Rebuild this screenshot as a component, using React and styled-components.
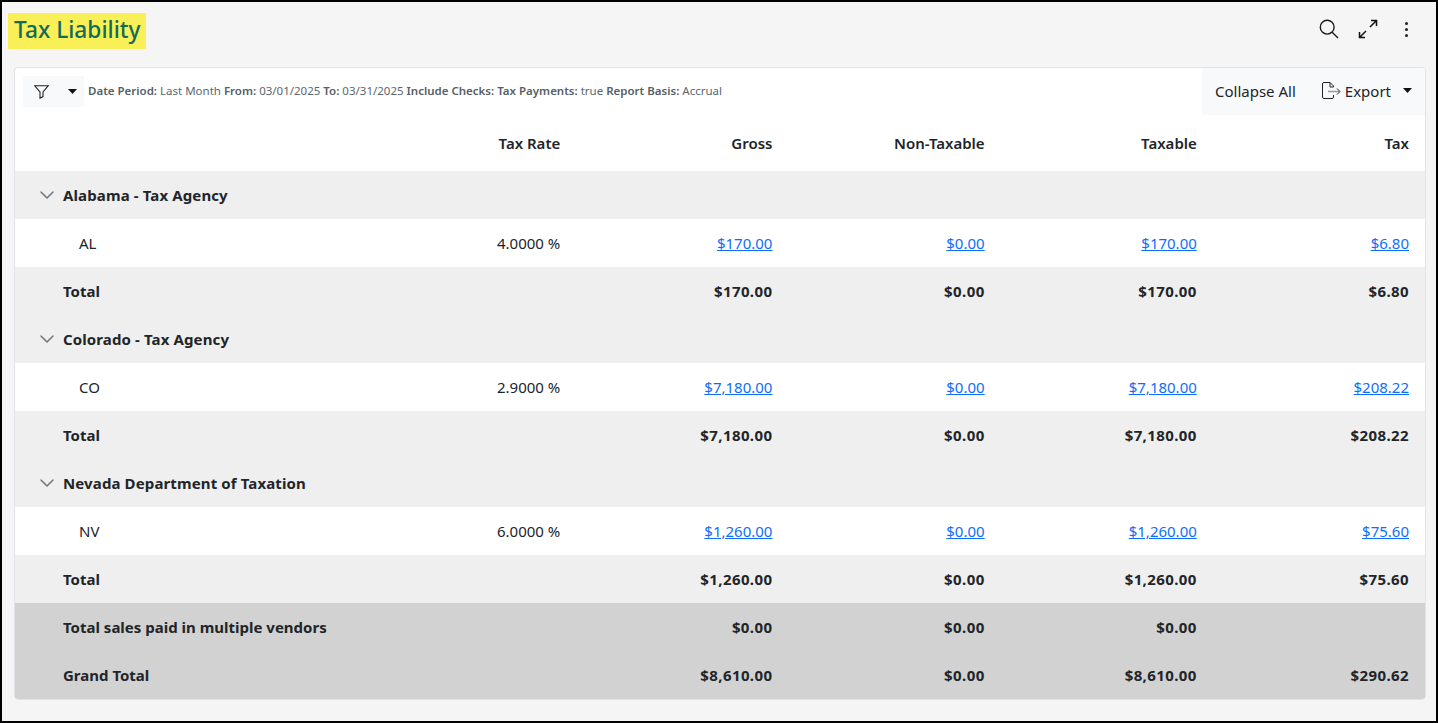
import React from 'react';
import styled, { createGlobalStyle } from 'styled-components';
import { ChevronDown } from 'lucide-react';

const GlobalStyle = createGlobalStyle`
  html, body {
    margin: 0;
    padding: 0;
    background: #f5f5f5;
  }
  * {
    box-sizing: border-box;
  }
`;

const groups = [
  {
    name: 'Alabama - Tax Agency',
    code: 'AL',
    rate: '4.0000 %',
    gross: '$170.00',
    nonTaxable: '$0.00',
    taxable: '$170.00',
    tax: '$6.80',
  },
  {
    name: 'Colorado - Tax Agency',
    code: 'CO',
    rate: '2.9000 %',
    gross: '$7,180.00',
    nonTaxable: '$0.00',
    taxable: '$7,180.00',
    tax: '$208.22',
  },
  {
    name: 'Nevada Department of Taxation',
    code: 'NV',
    rate: '6.0000 %',
    gross: '$1,260.00',
    nonTaxable: '$0.00',
    taxable: '$1,260.00',
    tax: '$75.60',
  },
];

const filters = [
  ['Date Period:', 'Last Month'],
  ['From:', '03/01/2025'],
  ['To:', '03/31/2025'],
  ['Include Checks:', ''],
  ['Tax Payments:', 'true'],
  ['Report Basis:', 'Accrual'],
];

const Caret = () => (
  <svg width="9" height="5" viewBox="0 0 9 5"><path d="M0 0h9L4.5 5z" fill="#111" /></svg>
);

const App = () => (
  <Page>
    <GlobalStyle />
    <TopBar>
      <Title>Tax Liability</Title>
      <TopIcons>
        <svg width="20" height="20" viewBox="0 0 20 20" fill="none" stroke="#1c1c1c" strokeWidth="1.4">
          <circle cx="8.2" cy="8.2" r="6.9" />
          <path d="M13.2 13.2L19 19" />
        </svg>
        <svg width="20" height="20" viewBox="0 0 20 20" fill="none" stroke="#111" strokeWidth="1.5">
          <path d="M1.500 18.500L8 12M12 8L18.500 1.500M13 1.500H18.500V7M1.500 13V18.500H7" />
        </svg>
        <Dots><i /><i /><i /></Dots>
      </TopIcons>
    </TopBar>
    <Card>
      <Toolbar>
        <FilterButton>
          <svg width="15" height="14" viewBox="0 0 15 14" fill="none" stroke="#222" strokeWidth="1.1">
            <path d="M.8.8h13.4L9 7v4.6l-3 1.6V7z" />
          </svg>
          <Caret />
        </FilterButton>
        <FilterText>
          {filters.map(([label, value]) => (
            <React.Fragment key={label}>
              <b>{label}</b>
              {value && ` ${value}`}
              {' '}
            </React.Fragment>
          ))}
        </FilterText>
        <Actions>
          <Action>Collapse All</Action>
          <ExportAction>
            <svg width="19" height="17" viewBox="0 0 19 17" fill="none" stroke="#222" strokeWidth="1">
              <path d="M11.5 5V4L8 .5H2A1.5 1.5 0 0 0 .5 2v13A1.5 1.5 0 0 0 2 16.5h8a1.5 1.5 0 0 0 1.500-1.500V13" />
              <path d="M8 .5V5h3.500" />
              <path d="M6 9.500h11.500" stroke="#999" strokeWidth="1.400" />
              <path d="M15 6.500l3 3-3 3" />
            </svg>
            Export
            <CaretSlot><Caret /></CaretSlot>
          </ExportAction>
        </Actions>
      </Toolbar>
      <Table>
        <colgroup>
          <col />
          <NumberCol />
          <NumberCol />
          <NumberCol />
          <NumberCol />
          <NumberCol />
        </colgroup>
        <thead>
          <tr>
            <HeadCell />
            <HeadCell>Tax Rate</HeadCell>
            <HeadCell>Gross</HeadCell>
            <HeadCell>Non-Taxable</HeadCell>
            <HeadCell>Taxable</HeadCell>
            <HeadCell>Tax</HeadCell>
          </tr>
        </thead>
        <tbody>
          {groups.map((group) => (
            <React.Fragment key={group.code}>
              <ShadedRow>
                <NameCell colSpan={6}>
                  <GroupName>
                    <ChevronDown size={24} color="#6c757d" strokeWidth={1.5} />
                    {group.name}
                  </GroupName>
                </NameCell>
              </ShadedRow>
              <tr>
                <CodeCell>{group.code}</CodeCell>
                <Cell>{group.rate}</Cell>
                <Cell><Amount href="#">{group.gross}</Amount></Cell>
                <Cell><Amount href="#">{group.nonTaxable}</Amount></Cell>
                <Cell><Amount href="#">{group.taxable}</Amount></Cell>
                <Cell><Amount href="#">{group.tax}</Amount></Cell>
              </tr>
              <ShadedRow>
                <TotalName>Total</TotalName>
                <TotalCell />
                <TotalCell>{group.gross}</TotalCell>
                <TotalCell>{group.nonTaxable}</TotalCell>
                <TotalCell>{group.taxable}</TotalCell>
                <TotalCell>{group.tax}</TotalCell>
              </ShadedRow>
            </React.Fragment>
          ))}
          <SummaryRow>
            <TotalName>Total sales paid in multiple vendors</TotalName>
            <TotalCell />
            <TotalCell>$0.00</TotalCell>
            <TotalCell>$0.00</TotalCell>
            <TotalCell>$0.00</TotalCell>
            <TotalCell />
          </SummaryRow>
          <SummaryRow>
            <TotalName>Grand Total</TotalName>
            <TotalCell />
            <TotalCell>$8,610.00</TotalCell>
            <TotalCell>$0.00</TotalCell>
            <TotalCell>$8,610.00</TotalCell>
            <TotalCell>$290.62</TotalCell>
          </SummaryRow>
        </tbody>
      </Table>
    </Card>
  </Page>
);

const Page = styled.div`
  width: 1438px;
  height: 723px;
  overflow: hidden;
  padding: 11px 10px 0 6px;
  background: #f5f5f5;
  border: solid #000;
  border-width: 2px;
  font-family: "Noto Sans", "Open Sans", sans-serif;
  color: #212529;
`;

const TopBar = styled.div`
  display: flex;
  align-items: flex-start;
  justify-content: space-between;
  height: 54px;
`;

const Title = styled.h1`
  margin: 0;
  height: 36px;
  padding: 0 6px;
  background: #f9ef57;
  color: #136a5b;
  font-size: 22.7px;
  font-weight: 500;
  line-height: 34px;
`;

const TopIcons = styled.div`
  display: flex;
  align-items: center;
  gap: 19px;
  height: 18px;
  margin-top: 7px;
  padding-right: 18px;
`;

const Dots = styled.span`
  display: flex;
  flex-direction: column;
  gap: 3px;
  margin-left: 8px;

  i {
    width: 3px;
    height: 3px;
    border-radius: 50%;
    background: #222;
  }
`;

const Card = styled.div`
  margin-left: 6px;
  border: 1px solid #e2e2e8;
  border-radius: 4px;
  background: #fff;
  overflow: hidden;
`;

const Toolbar = styled.div`
  display: flex;
  align-items: flex-start;
  height: 47px;
  padding-left: 8px;
`;

const FilterButton = styled.div`
  display: flex;
  align-items: center;
  justify-content: space-between;
  flex: none;
  width: 61px;
  height: 31px;
  margin-top: 8px;
  padding: 0 7px 0 11px;
  background: #f8f9fa;
`;

const FilterText = styled.div`
  flex: 1;
  margin: 15px 0 0 4px;
  color: #5c6670;
  font-size: 11.5px;
  line-height: 16px;
  white-space: pre-wrap;

  b {
    font-weight: 600;
    color: #565e66;
  }
`;

const Actions = styled.div`
  display: flex;
  align-items: center;
  flex: none;
  width: 223px;
  height: 47px;
  padding: 0 0 2px 13px;
  background: #f8f9fa;
  color: #212529;
  font-size: 15px;
`;

const Action = styled.span`
  white-space: nowrap;
`;

const ExportAction = styled(Action)`
  display: flex;
  align-items: center;
  gap: 4px;
  margin-left: 26px;
`;

const CaretSlot = styled.span`
  display: flex;
  margin-left: 8px;
`;

const Table = styled.table`
  width: 100%;
  border-collapse: collapse;
  table-layout: fixed;
  font-size: 15px;
`;

const NumberCol = styled.col`
  width: 212.2px;
`;

const HeadCell = styled.th`
  height: 56px;
  padding: 0 16px;
  text-align: right;
  font-weight: 600;
`;

const Cell = styled.td`
  height: 48px;
  padding: 0 16px;
  text-align: right;
`;

const CodeCell = styled(Cell)`
  padding-left: 64px;
  text-align: left;
`;

const NameCell = styled(Cell)`
  padding-left: 20px;
  text-align: left;
`;

const TotalCell = styled(Cell)`
  font-weight: 700;
  letter-spacing: 0.4px;
`;

const TotalName = styled(TotalCell)`
  padding-left: 48px;
  padding-right: 0;
  text-align: left;
  letter-spacing: 0;
  white-space: nowrap;
`;

const GroupName = styled.span`
  display: flex;
  align-items: center;
  gap: 4px;
  font-weight: 700;
  letter-spacing: 0.12px;
`;

const ShadedRow = styled.tr`
  background: #efefef;
`;

const SummaryRow = styled.tr`
  background: #d2d2d2;
`;

const Amount = styled.a`
  color: #0d6efd;
  text-decoration: underline;
`;

export default App;
